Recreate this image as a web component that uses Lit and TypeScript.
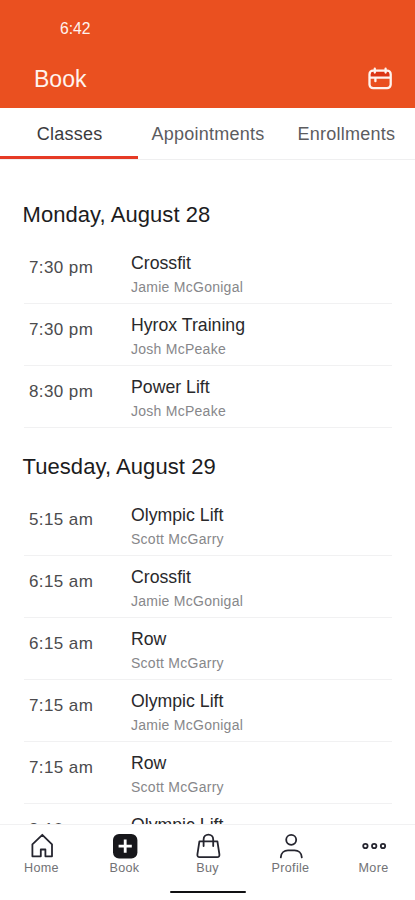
import { LitElement, html, css, svg } from "lit";
import { customElement, property } from "lit/decorators.js";

interface Session {
  time: string;
  name: string;
  coach: string;
}

interface Day {
  title: string;
  sessions: Session[];
}

const DAYS: Day[] = [
  {
    title: "Monday, August 28",
    sessions: [
      { time: "7:30 pm", name: "Crossfit", coach: "Jamie McGonigal" },
      { time: "7:30 pm", name: "Hyrox Training", coach: "Josh McPeake" },
      { time: "8:30 pm", name: "Power Lift", coach: "Josh McPeake" },
    ],
  },
  {
    title: "Tuesday, August 29",
    sessions: [
      { time: "5:15 am", name: "Olympic Lift", coach: "Scott McGarry" },
      { time: "6:15 am", name: "Crossfit", coach: "Jamie McGonigal" },
      { time: "6:15 am", name: "Row", coach: "Scott McGarry" },
      { time: "7:15 am", name: "Olympic Lift", coach: "Jamie McGonigal" },
      { time: "7:15 am", name: "Row", coach: "Scott McGarry" },
      { time: "8:10 am", name: "Olympic Lift", coach: "Scott McGarry" },
    ],
  },
];

const TABS = ["Classes", "Appointments", "Enrollments"];

const NAV = [
  {
    label: "Home",
    icon: svg`<path d="M4.400 24.300V12.300L14.300 2.800l9.700 9.500v12h-6.600v-6.800h-4.600v6.800z" />`,
  },
  {
    label: "Book",
    icon: svg`<rect class="solid" x="2" y="2" width="24.400" height="24.400" rx="6" />
      <path class="plus" d="M14.200 7.600v13.200M7.600 14.200h13.200" />`,
  },
  {
    label: "Buy",
    icon: svg`<path d="M5.400 9.400h18l2 13c.2 1.800-.6 2.800-2.200 2.800H5.600c-1.600 0-2.400-1-2.200-2.800z" />
      <path d="M9.600 14V7.400a4.800 4.800 0 0 1 9.600 0V14" />`,
  },
  {
    label: "Profile",
    icon: svg`<circle cx="14.200" cy="7.800" r="5" />
      <path d="M3.800 25.400c.2-4.800 3.600-7 7.200-7h6.600c3.600 0 7 2.200 7.200 7" />`,
  },
  {
    label: "More",
    icon: svg`<circle cx="5.400" cy="14" r="2.200" /><circle cx="14.200" cy="14" r="2.200" /><circle cx="23" cy="14" r="2.200" />`,
  },
];

@customElement("session-row")
class SessionRow extends LitElement {
  @property({ attribute: false }) session!: Session;

  static styles = css`
    :host {
      display: flex;
      box-sizing: border-box;
      height: 62px;
      margin: 0 23px 0 24px;
      border-bottom: 1px solid #f1f1f2;
    }
    .time {
      width: 107px;
      box-sizing: border-box;
      padding: 16px 0 0 5px;
      font-size: 17px;
      line-height: 20px;
      letter-spacing: 0.4px;
      color: #4b4b4d;
    }
    .name {
      padding-top: 11px;
      font-size: 17.7px;
      line-height: 20px;
      color: #29292b;
    }
    .coach {
      padding-top: 5px;
      font-size: 14px;
      line-height: 18px;
      letter-spacing: 0.26px;
      color: #87878a;
    }
  `;

  render() {
    return html`
      <div class="time">${this.session.time}</div>
      <div>
        <div class="name">${this.session.name}</div>
        <div class="coach">${this.session.coach}</div>
      </div>
    `;
  }
}

@customElement("app-root")
class AppRoot extends LitElement {
  static styles = css`
    :host {
      display: flex;
      flex-direction: column;
      width: 415px;
      height: 900px;
      overflow: hidden;
      background: #fff;
      font-family: "Liberation Sans", Arial, sans-serif;
      white-space: nowrap;
    }
    header {
      flex: none;
      height: 108px;
      background: #ea5020;
      color: #fff3ee;
    }
    .clock {
      padding: 19px 0 0 60px;
      font-size: 15.7px;
      line-height: 20px;
    }
    .bar {
      display: flex;
      align-items: center;
      justify-content: space-between;
      height: 32px;
      padding: 24px 21px 0 34px;
    }
    .title {
      font-size: 23px;
      line-height: 30px;
    }
    .calendar {
      display: block;
      width: 28px;
      height: 28px;
      fill: none;
      stroke: #fff3ee;
      stroke-width: 2.3;
      stroke-linecap: round;
    }
    .lid {
      fill: #dc3514;
      stroke: none;
    }
    .tabs {
      flex: none;
      display: grid;
      grid-template-columns: repeat(3, 1fr);
      height: 51px;
      border-bottom: 1px solid #efeff0;
    }
    .tab {
      box-sizing: border-box;
      padding: 14px 0 0 1px;
      text-align: center;
      font-size: 18px;
      line-height: 24px;
      letter-spacing: 0.25px;
      color: #5c5c5f;
    }
    .tab.active {
      color: #3b3b3d;
      border-bottom: 3px solid #e63a25;
    }
    main {
      flex: 1;
      min-height: 0;
      overflow: hidden;
      padding-top: 16px;
    }
    h2 {
      height: 28px;
      margin: 0;
      padding: 24px 0 14px 22.5px;
      font-size: 22px;
      font-weight: 400;
      line-height: 29px;
      letter-spacing: 0.07px;
      color: #1c1c1e;
    }
    nav {
      flex: none;
      display: grid;
      grid-template-columns: repeat(5, 1fr);
      height: 66px;
      border-top: 1px solid #f1f1f2;
    }
    .item {
      display: flex;
      flex-direction: column;
      align-items: center;
      padding-top: 7px;
      font-size: 12.6px;
      line-height: 16px;
      letter-spacing: 0.3px;
      color: #727275;
    }
    .icon {
      width: 28px;
      height: 28px;
      fill: none;
      stroke: #25252f;
      stroke-width: 1.8;
      stroke-linejoin: round;
      stroke-linecap: round;
    }
    .solid {
      fill: #17171b;
      stroke: none;
    }
    .plus {
      stroke: #fff;
      stroke-width: 2.8;
      stroke-linecap: butt;
    }
    .handle {
      flex: none;
      width: 76px;
      height: 2px;
      margin: 0 auto 7px;
      border-radius: 1px;
      background: #101012;
    }
  `;

  render() {
    return html`
      <header>
        <div class="clock">6:42</div>
        <div class="bar">
          <div class="title">Book</div>
          <svg class="calendar" viewBox="0 0 28 28">
            <path class="lid" d="M4 6h20v7H4z" />
            <rect x="3.500" y="5.600" width="21.200" height="17.600" rx="3.600" />
            <path d="M4 12.600h20M8.800 3.700v3.800M19.600 3.700v3.800M9.400 14v2.200" />
          </svg>
        </div>
      </header>
      <div class="tabs">
        ${TABS.map((tab, i) => html`<div class="tab ${i === 0 ? "active" : ""}">${tab}</div>`)}
      </div>
      <main>
        ${DAYS.map(
          (day) => html`
            <h2>${day.title}</h2>
            ${day.sessions.map((s) => html`<session-row .session=${s}></session-row>`)}
          `
        )}
      </main>
      <nav>
        ${NAV.map(
          (item) => html`
            <div class="item">
              <svg class="icon" viewBox="0 0 28 28">${item.icon}</svg>
              <div>${item.label}</div>
            </div>
          `
        )}
      </nav>
      <div class="handle"></div>
    `;
  }
}
